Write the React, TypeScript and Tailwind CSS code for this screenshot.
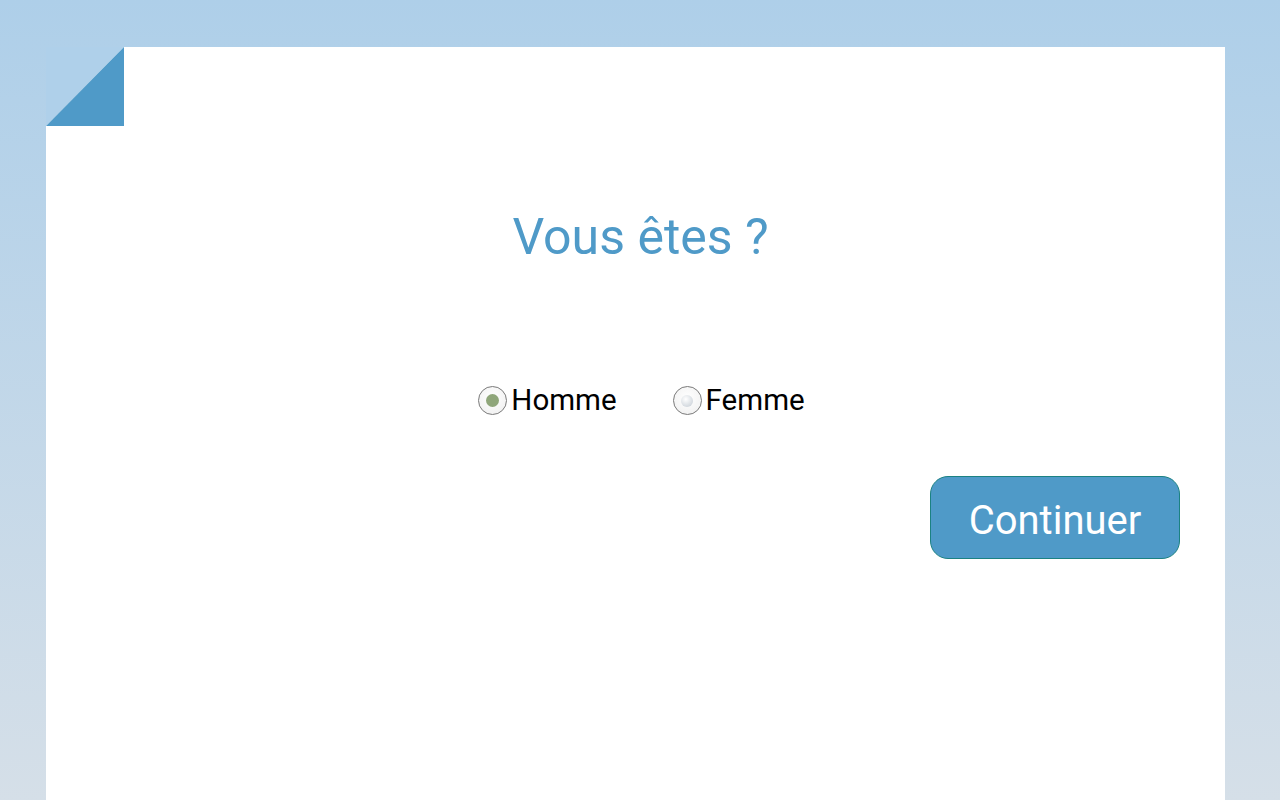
import { useState } from "react";

const OPTIONS = ["Homme", "Femme"];

function Radio({ checked }: { checked: boolean }) {
  return (
    <span className="flex h-[29px] w-[29px] items-center justify-center rounded-full border border-[#7a7a7a] bg-[radial-gradient(circle_at_50%_40%,#ffffff,#eeeeee)]">
      {checked ? (
        <span className="h-[13px] w-[13px] rounded-full bg-[#8fa67a]" />
      ) : (
        <span className="h-[12px] w-[12px] rounded-full bg-[radial-gradient(circle_at_40%_35%,#ffffff,#c2cad2)]" />
      )}
    </span>
  );
}

export default function App() {
  const [choice, setChoice] = useState("Homme");

  return (
    <div
      className="h-[800px] w-[1280px] overflow-hidden bg-gradient-to-b from-[#aecfe9] to-[#d5dfe8]"
      style={{ fontFamily: "Roboto, 'Liberation Sans', sans-serif" }}
    >
      <div className="relative ml-[46px] mt-[47px] flex h-[753px] w-[1179px] flex-col bg-white">
        <svg className="absolute left-0 top-0" width="78" height="79" viewBox="0 0 78 79">
          <polygon points="0,0 78,0 0,79" fill="#afd0ea" />
          <polygon points="78,0 78,79 0,79" fill="#4f9ac8" />
        </svg>

        <h1 className="mt-[161px] pl-[10px] text-center text-[50px] leading-[59px] font-normal text-[#4f9ac8]">
          Vous êtes ?
        </h1>

        <div className="mt-[116px] flex justify-center gap-[56px] pl-[12px]">
          {OPTIONS.map(o => (
            <label
              key={o}
              className="flex cursor-pointer items-center gap-[4px] text-[29.5px] leading-[35px] text-black"
              onClick={() => setChoice(o)}
            >
              <Radio checked={choice === o} />
              <span>{o}</span>
            </label>
          ))}
        </div>

        <div className="mt-[58px] flex justify-end pr-[45px]">
          <button className="flex h-[83px] w-[250px] items-center justify-center rounded-[18px] border border-[#1b8282] bg-[#4f9ac8] pt-[5px] text-[40px] leading-[47px] text-white">
            Continuer
          </button>
        </div>
      </div>
    </div>
  );
}
